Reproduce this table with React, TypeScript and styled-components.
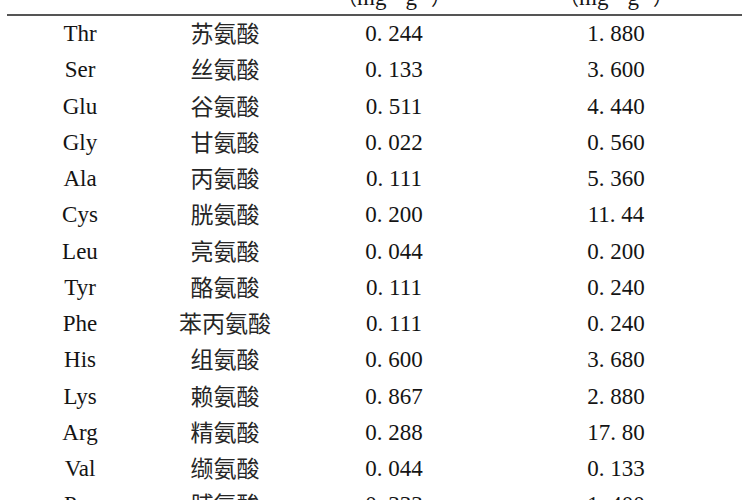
import React from "react";
import styled, { createGlobalStyle } from "styled-components";

const Global = createGlobalStyle`
  html, body {
    margin: 0;
    padding: 0;
    background: #ffffff;
    overflow: hidden;
  }
  body {
    width: 750px;
    height: 500px;
  }
`;

const Table = styled.div`
  width: 750px;
  height: 500px;
  overflow: hidden;
  font-family: "Liberation Serif", "Noto Sans CJK SC", serif;
  font-size: 23px;
  color: #141414;
`;

const Grid = styled.div<{ $h: number }>`
  display: grid;
  grid-template-columns: 160px 130px 208px 236px 1fr;
  height: ${(p) => p.$h}px;
  line-height: ${(p) => p.$h}px;
  align-items: start;
`;

const HeaderRow = styled(Grid)`
  margin-top: -20px;
`;

const Cell = styled.div`
  text-align: center;
  white-space: nowrap;
`;

const Cjk = styled.span`
  font-family: "Noto Sans CJK SC", sans-serif;
  font-size: 23px;
  color: #262626;
  position: relative;
  top: -2px;
`;

const Paren = styled.span`
  font-family: "Noto Sans CJK SC", sans-serif;
  font-size: 20px;
`;

const Sup = styled.sup`
  font-size: 13px;
  line-height: 0;
  vertical-align: 9px;
`;

const Rule = styled.div`
  height: 2px;
  margin: 0 8px 0 7px;
  background: #555555;
`;

const Body = styled.div`
  display: flex;
  flex-direction: column;
`;

const rows: [string, string, string, string][] = [
  ["Thr", "苏氨酸", "0. 244", "1. 880"],
  ["Ser", "丝氨酸", "0. 133", "3. 600"],
  ["Glu", "谷氨酸", "0. 511", "4. 440"],
  ["Gly", "甘氨酸", "0. 022", "0. 560"],
  ["Ala", "丙氨酸", "0. 111", "5. 360"],
  ["Cys", "胱氨酸", "0. 200", "11. 44"],
  ["Leu", "亮氨酸", "0. 044", "0. 200"],
  ["Tyr", "酪氨酸", "0. 111", "0. 240"],
  ["Phe", "苯丙氨酸", "0. 111", "0. 240"],
  ["His", "组氨酸", "0. 600", "3. 680"],
  ["Lys", "赖氨酸", "0. 867", "2. 880"],
  ["Arg", "精氨酸", "0. 288", "17. 80"],
  ["Val", "缬氨酸", "0. 044", "0. 133"],
  ["Pro", "脯氨酸", "0. 333", "1. 400"],
];

const Unit = () => (
  <>
    <Paren>（</Paren>mg · g<Sup>−1</Sup>
    <Paren>）</Paren>
  </>
);

export default function App() {
  return (
    <>
      <Global />
      <Table>
        <HeaderRow $h={34}>
          <Cell />
          <Cell />
          <Cell>
            <Unit />
          </Cell>
          <Cell>
            <Unit />
          </Cell>
          <Cell />
        </HeaderRow>
        <Rule />
        <Body>
          {rows.map((r) => (
            <Grid $h={36.25} key={r[0]}>
              <Cell>{r[0]}</Cell>
              <Cell>
                <Cjk>{r[1]}</Cjk>
              </Cell>
              <Cell>{r[2]}</Cell>
              <Cell>{r[3]}</Cell>
              <Cell />
            </Grid>
          ))}
        </Body>
      </Table>
    </>
  );
}
